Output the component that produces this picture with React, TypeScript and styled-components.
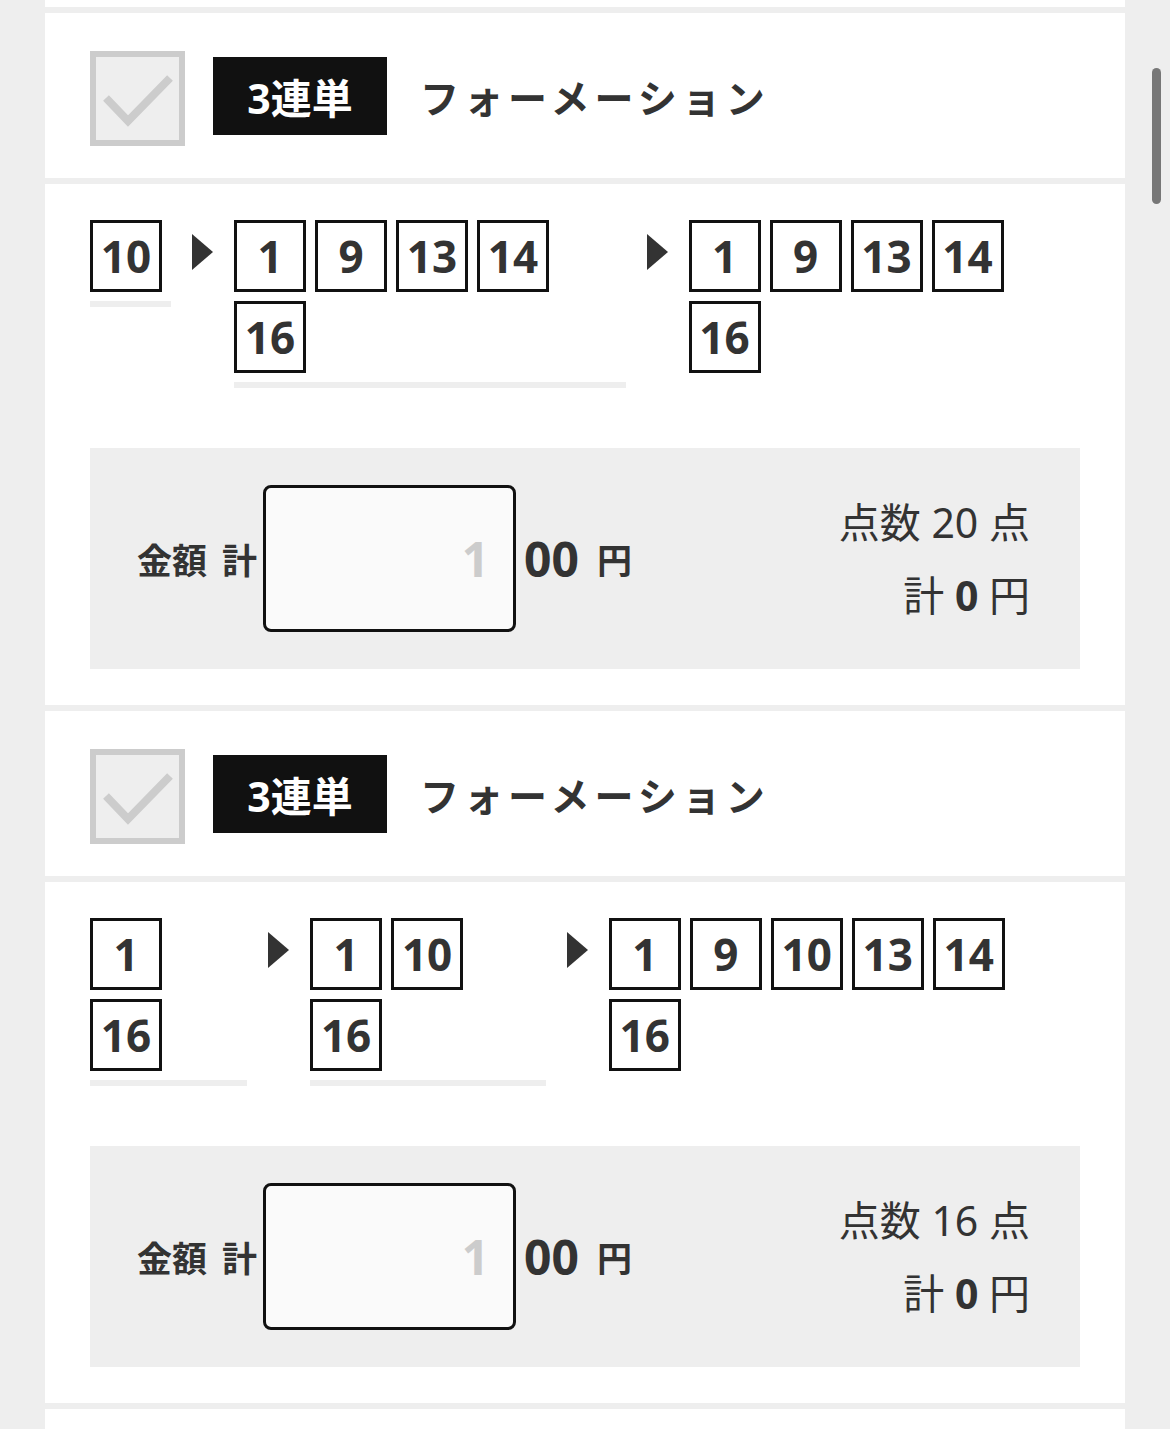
import styled, { createGlobalStyle } from "styled-components";

const GlobalStyle = createGlobalStyle`
  html, body {
    margin: 0;
    padding: 0;
    background: #eeeeee;
  }
  body {
    font-family: "Noto Sans", "Noto Sans CJK JP", sans-serif;
    color: #333333;
  }
`;

const Page = styled.div`
  padding: 0 45px;
  height: 1429px;
  overflow: hidden;
`;

const Card = styled.section<{ $h?: number }>`
  background: #ffffff;
  margin-bottom: 6px;
  height: ${(props) => (props.$h ? `${props.$h}px` : "auto")};
`;

const Header = styled(Card)`
  height: 165px;
  padding: 0 45px;
  display: flex;
  align-items: center;
  box-sizing: border-box;
`;

const CheckBox = styled.div`
  width: 95px;
  height: 95px;
  box-sizing: border-box;
  border: 6px solid #cccccc;
  background: #eeeeee;
  flex-shrink: 0;
  margin-top: 6px;
  svg {
    display: block;
  }
`;

const Badge = styled.div`
  width: 174px;
  height: 78px;
  margin-left: 28px;
  background: #111111;
  color: #ffffff;
  font-weight: 700;
  font-size: 41px;
  display: flex;
  align-items: center;
  justify-content: center;
  flex-shrink: 0;
`;

const Title = styled.h2`
  margin: 0 0 0 33px;
  font-size: 39px;
  font-weight: 700;
  letter-spacing: 5px;
  color: #333333;
`;

const Body = styled(Card)`
  padding: 36px 45px;
`;

const Selection = styled.div`
  display: flex;
  align-items: flex-start;
`;

const Column = styled.div<{ $underline: boolean }>`
  flex: 0 1 auto;
  display: flex;
  flex-wrap: wrap;
  align-content: flex-start;
  border-bottom: ${(props) => (props.$underline ? "6px solid #eeeeee" : "none")};
`;

const NumBox = styled.div`
  width: 72px;
  height: 72px;
  box-sizing: border-box;
  margin: 0 9px 9px 0;
  border: 3px solid #111111;
  display: flex;
  align-items: center;
  justify-content: center;
  font-size: 44px;
  font-weight: 700;
  color: #333333;
  line-height: 1;
`;

const Arrow = styled.div`
  width: 63px;
  flex-shrink: 0;
  display: flex;
  justify-content: center;
  padding-top: 14px;
  &::before {
    content: "";
    width: 0;
    height: 0;
    border-left: 21px solid #333333;
    border-top: 18.5px solid transparent;
    border-bottom: 18.5px solid transparent;
  }
`;

const AmountBox = styled.div`
  margin-top: 60px;
  height: 221px;
  background: #eeeeee;
  padding: 0 50px 0 47px;
  display: flex;
  align-items: center;
  justify-content: space-between;
`;

const AmountLeft = styled.div`
  display: flex;
  align-items: center;
`;

const Label = styled.span`
  font-size: 35px;
  font-weight: 700;
  color: #333333;
  word-spacing: 6px;
  margin-right: 6px;
`;

const Input = styled.input`
  width: 253px;
  height: 147px;
  box-sizing: border-box;
  border: 3px solid #111111;
  border-radius: 8px;
  background: #fafafa;
  text-align: right;
  padding: 0 24px 0 10px;
  font-family: "Noto Sans", "Noto Sans CJK JP", sans-serif;
  font-size: 48px;
  font-weight: 700;
  color: #333333;
  outline: none;
  &::placeholder {
    color: #cccccc;
  }
`;

const Hundreds = styled.span`
  font-size: 48px;
  font-weight: 700;
  margin-left: 8px;
  color: #333333;
`;

const Yen = styled.span`
  font-size: 35px;
  font-weight: 700;
  margin-left: 18px;
  color: #333333;
`;

const Summary = styled.div`
  text-align: right;
  font-size: 41px;
  line-height: 73px;
  color: #333333;
`;

const Strong = styled.b`
  font-weight: 700;
`;

const ScrollThumb = styled.div`
  position: fixed;
  top: 68px;
  right: 9px;
  width: 9px;
  height: 136px;
  border-radius: 5px;
  background: #777777;
`;

function Check() {
  return (
    <svg width="83" height="83" viewBox="0 0 83 83">
      <polyline
        points="10,41 32,64 74,21"
        fill="none"
        stroke="#cccccc"
        strokeWidth="8"
      />
    </svg>
  );
}

interface Bet {
  cols: number[][];
  points: number;
}

const bets: Bet[] = [
  { cols: [[10], [1, 9, 13, 14, 16], [1, 9, 13, 14, 16]], points: 20 },
  { cols: [[1, 16], [1, 10, 16], [1, 9, 10, 13, 14, 16]], points: 16 },
];

function BetCard({ bet }: { bet: Bet }) {
  return (
    <>
      <Header as="header">
        <CheckBox>
          <Check />
        </CheckBox>
        <Badge>3連単</Badge>
        <Title>フォーメーション</Title>
      </Header>
      <Body>
        <Selection>
          {bet.cols.map((col, i) => (
            <>
              {i > 0 && <Arrow key={`a${i}`} />}
              <Column key={`c${i}`} $underline={i < bet.cols.length - 1}>
                {col.map((n) => (
                  <NumBox key={n}>{n}</NumBox>
                ))}
              </Column>
            </>
          ))}
        </Selection>
        <AmountBox>
          <AmountLeft>
            <Label>金額 計</Label>
            <Input placeholder="1" />
            <Hundreds>00</Hundreds>
            <Yen>円</Yen>
          </AmountLeft>
          <Summary>
            <div>点数 {bet.points} 点</div>
            <div>
              計 <Strong>0</Strong> 円
            </div>
          </Summary>
        </AmountBox>
      </Body>
    </>
  );
}

export default function App() {
  return (
    <>
      <GlobalStyle />
      <Page>
        <Card $h={7} />
        {bets.map((bet, i) => (
          <BetCard key={i} bet={bet} />
        ))}
        <Card $h={40} />
      </Page>
      <ScrollThumb />
    </>
  );
}
